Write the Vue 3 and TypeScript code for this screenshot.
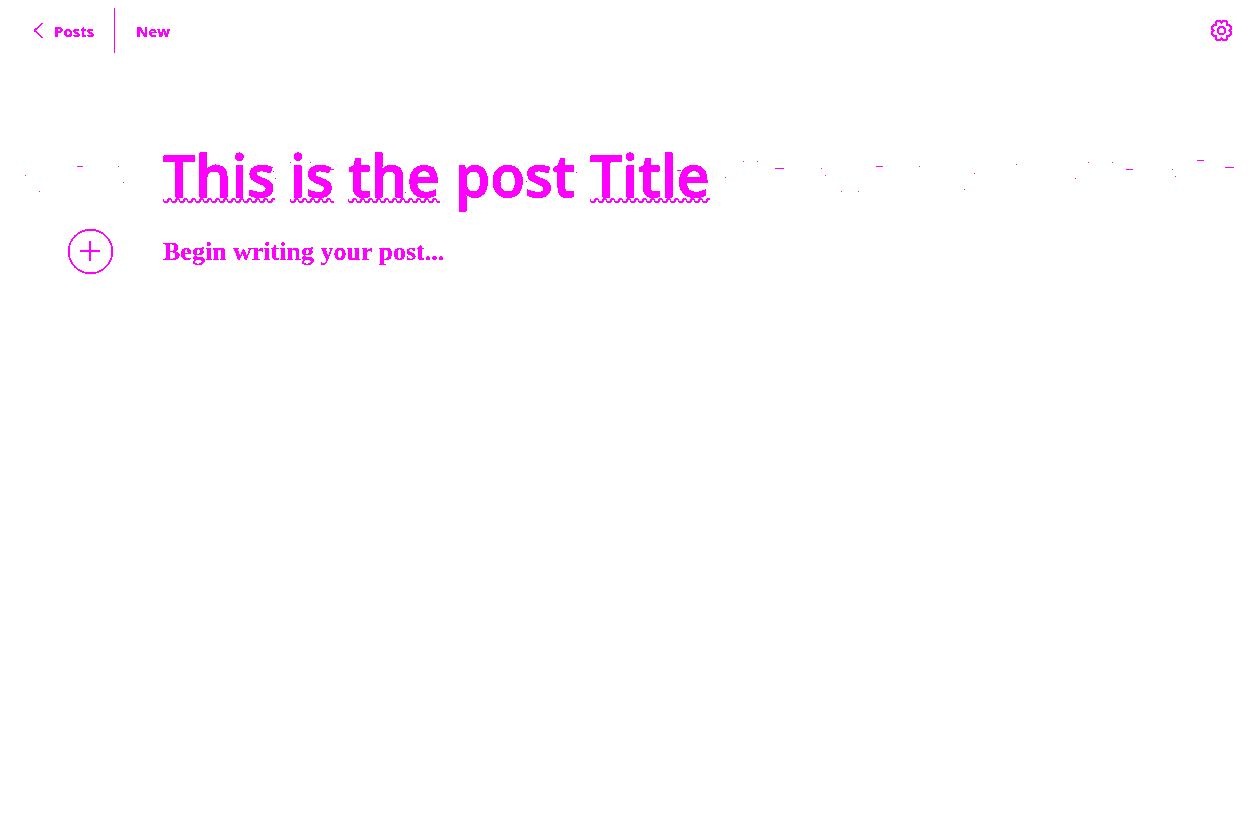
<script setup lang="ts">
import { ref } from 'vue'

interface Word { text: string; flagged: boolean }

const words: Word[] = [
  { text: 'This', flagged: true },
  { text: 'is', flagged: true },
  { text: 'the', flagged: true },
  { text: 'post', flagged: false },
  { text: 'Title', flagged: true },
]

const body = ref('')

// x, y, width of each fleck in the band behind the title
const flecks: [number, number, number][] = [
  [25, 175, 1], [39, 191, 1], [77, 166, 6], [118, 166, 1], [123, 182, 1],
  [215, 164, 1], [273, 171, 1], [275, 178, 1], [290, 162, 1], [310, 162, 1],
  [326, 169, 8], [405, 192, 1], [425, 167, 9], [526, 181, 1], [567, 165, 1],
  [576, 172, 1], [677, 170, 4], [725, 177, 1], [743, 161, 1], [757, 161, 1],
  [775, 168, 9], [821, 168, 1], [825, 175, 1], [841, 191, 1], [858, 191, 1],
  [876, 166, 7], [919, 166, 1], [964, 189, 1], [974, 173, 1], [1016, 164, 1],
  [1075, 178, 1], [1088, 162, 1], [1112, 162, 1], [1126, 169, 7], [1172, 169, 1],
  [1175, 176, 1], [1197, 160, 7], [1225, 167, 9],
]
</script>

<template>
  <div class="editor">
    <svg class="flecks" aria-hidden="true" shape-rendering="crispEdges">
      <filter id="crisp" x="0" y="0" width="100%" height="100%">
        <feComponentTransfer><feFuncA type="discrete" tableValues="0 0 1 1 1" /></feComponentTransfer>
      </filter>
      <rect v-for="([x, y, w], i) in flecks" :key="i" :x="x" :y="y" :width="w" height="1" />
    </svg>

    <header class="bar">
      <a class="back" href="#posts">
        <svg class="crisp" width="10" height="16" viewBox="0 0 10 16" aria-hidden="true">
          <path d="M8.500 0 .5 7.500l8 7.500" stroke-width="1.500" />
        </svg>
        <span class="crisp">Posts</span>
      </a>
      <span class="status crisp">New</span>
      <button class="settings" type="button" aria-label="Settings">
        <svg class="crisp" width="21" height="21" viewBox="0 0 22 22" aria-hidden="true">
          <path d="M6.500 1h3l1.500 2 1.500-2h3l1.500 1.500v3h2.500l1.500 1.500v2.500l-2 1.500 2 1.500v2.500l-1.500 1.500h-2.500v3l-1.500 1.500h-3l-1.500-2-1.500 2h-3l-1.500-1.500v-3h-2.500l-1.500-1.500v-2.500l2-1.500-2-1.500v-2.500l1.500-1.500h2.500v-3z" />
          <circle cx="11" cy="11" r="4" />
        </svg>
      </button>
    </header>

    <main class="page">
      <h1 class="title crisp" contenteditable="true" spellcheck="false" aria-label="Post title">
        <template v-for="(word, i) in words" :key="word.text"><span :class="{ flagged: word.flagged }">{{ word.text }}</span>{{ i < words.length - 1 ? ' ' : '' }}</template>
      </h1>
      <div class="row">
        <button class="add" type="button" aria-label="Add a card">
          <svg class="crisp" width="46" height="46" viewBox="0 0 46 46" aria-hidden="true">
            <circle cx="22.500" cy="22.500" r="21.800" stroke-width="1.500" />
            <path d="M12 22h20M22 12v20" stroke-width="2" shape-rendering="crispEdges" />
          </svg>
        </button>
        <textarea v-model="body" class="body crisp" rows="3" placeholder="Begin writing your post..." aria-label="Post content"></textarea>
      </div>
    </main>
  </div>
</template>

<style>
body {
  margin: 0;
  background: #fff;
}
</style>

<style scoped>
.editor {
  position: relative;
  min-height: 100vh;
  color: #f0f;
  font-family: "Open Sans", "Noto Sans", sans-serif;
  overflow: hidden;
}
.crisp {
  filter: url(#crisp);
}
.flecks {
  position: absolute;
  inset: 0;
  width: 100%;
  height: 100%;
  fill: #f0f;
  pointer-events: none;
}
.bar {
  display: flex;
  align-items: center;
  height: 45px;
  padding: 8px 18px 0 34px;
  font-size: 15px;
  font-weight: 700;
  line-height: 24px;
}
.back {
  display: flex;
  align-items: center;
  gap: 10px;
  height: 45px;
  padding-right: 20px;
  border-right: 1px solid #f0f;
  color: inherit;
  text-decoration: none;
}
.back path {
  fill: none;
  stroke: #f0f;
}
.status {
  margin-left: 21px;
}
.settings,
.add {
  padding: 0;
  border: 0;
  background: none;
  line-height: 0;
  cursor: pointer;
}
.settings {
  margin-left: auto;
}
.settings svg {
  fill: none;
  stroke: #f0f;
  stroke-width: 2;
}
.add svg {
  fill: none;
  stroke: #f0f;
}
.page {
  padding: 82px 68px 0;
}
.title {
  margin: 0 0 0 95px;
  font-size: 57px;
  font-weight: 600;
  line-height: 80px;
  outline: 0;
  -webkit-text-stroke: 1px #f0f;
}
.flagged {
  background: url("data:image/svg+xml,%3Csvg xmlns='http://www.w3.org/2000/svg' width='8' height='5' shape-rendering='crispEdges'%3E%3Cpath d='M0 1h1v3H0zM1 3h4v2H1zM4 1h2v3H4zM5 0h3v2H5z' fill='%23f0f'/%3E%3C/svg%3E") repeat-x left bottom 11px;
}
.row {
  display: flex;
  align-items: flex-start;
  gap: 49px;
  margin-top: 14px;
}
.body {
  flex: 1;
  padding: 5px 0;
  border: 0;
  outline: 0;
  resize: none;
  background: none;
  color: #f0f;
  font: 700 26px/36px "Liberation Serif", serif;
}
.body::placeholder {
  color: #f0f;
  opacity: 1;
}
</style>
